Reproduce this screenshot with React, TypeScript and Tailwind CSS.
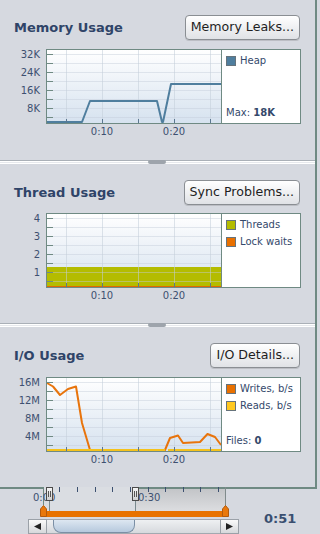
import type { ReactNode } from "react";

const MAJOR_Y = [5, 23, 41, 59];
const MINOR_Y = [14, 32, 50, 68];
const GRID_X = [66, 102, 138, 174, 210];
const RULER_TICKS = [59, 77, 95, 112, 130, 148, 165, 183, 200, 218];

function Chart({ id, yLabels, under, children }: { id: string; yLabels: string[]; under?: ReactNode; children?: ReactNode }) {
  return (
    <svg width={222} height={90} className="block shrink-0" fontFamily="DejaVu Sans, sans-serif">
      <defs>
        <linearGradient id={id} x1="0" y1="0" x2="0" y2="1">
          <stop offset="0" stopColor="#ffffff" />
          <stop offset="1" stopColor="#d6e2ef" />
        </linearGradient>
      </defs>
      <rect x={47} y={1} width={174} height={73} fill={`url(#${id})`} />
      {under}
      {[...MAJOR_Y, ...MINOR_Y].map((y) => (
        <line key={y} x1={47} x2={221} y1={y + 0.5} y2={y + 0.5} stroke="#c3cdd9" strokeOpacity={0.45} />
      ))}
      {GRID_X.map((x) => (
        <line key={x} x1={x + 0.5} x2={x + 0.5} y1={1} y2={74} stroke="#c3cdd9" strokeOpacity={0.55} />
      ))}
      {children}
      {[...MAJOR_Y, ...MINOR_Y].map((y) => (
        <line key={y} x1={47} x2={53} y1={y + 0.5} y2={y + 0.5} stroke="#6f8a83" />
      ))}
      {GRID_X.map((x) => (
        <line key={x} x1={x + 0.5} x2={x + 0.5} y1={70} y2={74} stroke="#5b7790" />
      ))}
      <rect x={46.5} y={0.5} width={175} height={74} fill="none" stroke="#6f8a83" />
      {yLabels.map((label, i) => (
        <text key={label} x={40} y={MAJOR_Y[i] + 4} fontSize={10} fill="#3d5070" textAnchor="end">
          {label}
        </text>
      ))}
      <text x={102} y={86} fontSize={10} fill="#3d5070" textAnchor="middle">
        0:10
      </text>
      <text x={174} y={86} fontSize={10} fill="#3d5070" textAnchor="middle">
        0:20
      </text>
    </svg>
  );
}

function Legend({ items, footer }: { items: { label: string; swatch: string }[]; footer?: ReactNode }) {
  return (
    <div className="flex h-[75px] w-[79px] flex-col border-y border-r border-[#6f8a83] bg-white pb-[5px] pl-[4px] pt-[6px]">
      <div className="flex flex-col gap-[7px]">
        {items.map((item) => (
          <div key={item.label} className="flex h-[10px] items-center gap-[4px]">
            <span className={`h-[10px] w-[10px] shrink-0 border border-[#66737c] ${item.swatch}`} />
            <span className="text-[10px] leading-none text-[#34496b]">{item.label}</span>
          </div>
        ))}
      </div>
      {footer && <div className="mt-auto text-[10px] leading-none text-[#34496b]">{footer}</div>}
    </div>
  );
}

function Section({
  title,
  action,
  className,
  chartGap,
  chart,
  legend,
}: {
  title: string;
  action: string;
  className: string;
  chartGap: string;
  chart: ReactNode;
  legend: ReactNode;
}) {
  return (
    <section className={`flex flex-col ${className}`}>
      <div className="flex h-[25px] items-center justify-between pl-[14px] pr-[15px]">
        <h2 className="text-[13px] font-bold leading-none text-[#2f4468]">{title}</h2>
        <button
          type="button"
          className="flex h-[25px] items-center rounded-[4px] border border-[#8a8e93] bg-linear-to-b from-white to-[#e0e2e6] px-[5px] text-[12.6px] leading-none text-[#1e1e1e] shadow-[0_1px_0_rgba(0,0,0,0.12)]"
        >
          {action}
        </button>
      </div>
      <div className={`flex items-start ${chartGap}`}>
        {chart}
        {legend}
      </div>
    </section>
  );
}

function Splitter() {
  return (
    <div className="relative flex h-[4px] flex-col">
      <div className="h-px bg-[#aab0b7]" />
      <div className="h-px bg-white" />
      <div className="h-px bg-[#e6e8ec]" />
      <div className="h-px bg-white" />
      <div className="absolute left-[148px] top-0 h-[4px] w-[18px] rounded-[2px] bg-[#9ea4ac]" />
    </div>
  );
}

function Handle({ className }: { className: string }) {
  return (
    <div
      className={`absolute top-0 flex h-[14px] w-[7px] justify-center gap-px border border-[#4b4b4b] bg-linear-to-b from-[#f4f4f4] to-[#cfd0d2] pt-[3px] ${className}`}
    >
      <span className="h-[6px] w-px bg-[#555]" />
      <span className="h-[6px] w-px bg-[#555]" />
    </div>
  );
}

function Marker({ className }: { className: string }) {
  return (
    <svg width={7} height={12} className={`absolute top-[18px] ${className}`}>
      <polygon points="0.5,11.5 0.5,4 3.5,0.5 6.5,4 6.5,11.5" fill="#e9780c" stroke="#b35a0d" />
    </svg>
  );
}

function Timeline() {
  return (
    <div className="flex h-[47px]">
      <div className="relative w-[240px]">
        <div className="absolute left-0 top-0 h-[2px] w-[43px] bg-[#6f8a83]" />
        <div className="absolute left-[43px] top-0 h-[24px] w-[92px] bg-[#dadde2]" />
        <div className="absolute left-[135px] top-0 h-[2px] w-[105px] bg-[#6f8a83]" />
        <div className="absolute left-[135px] top-[2px] h-[22px] w-[90px] bg-linear-to-b from-[#c3c5c8] to-[#dcdde0]" />
        <div className="absolute left-[225px] top-0 h-[24px] w-px bg-[#808b8c]" />
        <div className="absolute left-[43px] top-0 h-[18px] w-px bg-[#6f8a83]" />
        <svg width={240} height={6} className="absolute left-0 top-0">
          {RULER_TICKS.map((x) => (
            <line key={x} x1={x + 0.5} x2={x + 0.5} y1={0} y2={5} stroke="#3c5070" />
          ))}
        </svg>
        <span className="absolute left-[33px] top-[6px] text-[10px] leading-[10px] text-[#3d5070]">0:00</span>
        <span className="absolute left-[138px] top-[6px] text-[10px] leading-[10px] text-[#3d5070]">0:30</span>
        <div className="absolute left-[49px] top-[14px] h-[10px] w-px bg-[#7a8a8e]" />
        <div className="absolute left-[135px] top-[14px] h-[10px] w-px bg-[#7a8a8e]" />
        <Handle className="left-[46px]" />
        <Handle className="left-[132px]" />
        <div className="absolute left-[45px] top-[24px] h-[6px] w-[180px] bg-[#e87200]" />
        <Marker className="left-[40px]" />
        <Marker className="left-[222px]" />
        <div className="ml-[28px] mt-[32px] flex h-[15px] w-[211px]">
          <div className="flex w-[19px] items-center justify-center border border-[#9ba1a8] bg-linear-to-b from-[#fafafa] to-[#d6d8db]">
            <svg width={7} height={7}>
              <polygon points="7,0 7,7 0,3.5" fill="#222" />
            </svg>
          </div>
          <div className="flex flex-1 border-y border-[#a3a9b0] bg-linear-to-b from-[#eef0f2] to-[#d6d9dd]">
            <div className="ml-[6px] h-full w-[82px] rounded-b-[8px] border border-t-0 border-[#7b8fa5] bg-linear-to-b from-[#dde7f1] to-[#b6c9dd]" />
          </div>
          <div className="flex w-[19px] items-center justify-center border border-[#9ba1a8] bg-linear-to-b from-[#fafafa] to-[#d6d8db]">
            <svg width={7} height={7}>
              <polygon points="0,0 0,7 7,3.5" fill="#222" />
            </svg>
          </div>
        </div>
      </div>
      <div className="w-[77px] border-t-2 border-[#6f8a83] pl-[24px] pt-[17px]">
        <span className="text-[13px] font-bold leading-[13px] text-[#3a4f70]">0:51</span>
      </div>
    </div>
  );
}

export default function App() {
  return (
    <div className="h-[534px] w-[320px] overflow-hidden bg-[#d6d9e0] font-['DejaVu_Sans',sans-serif]">
      <div className="flex h-[487px] w-[317px] flex-col border-r-2 border-[#6f8a83]">
        <Section
          title="Memory Usage"
          action="Memory Leaks..."
          className="h-[160px] pt-[15px]"
          chartGap="mt-[9px]"
          chart={
            <Chart id="mem" yLabels={["32K", "24K", "16K", "8K"]}>
              <polyline
                points="47,73 82,73 90,52 157,52 162,73 163,73 171,35 221,35"
                fill="none"
                stroke="#4f7e9e"
                strokeWidth={2}
                strokeLinejoin="round"
              />
            </Chart>
          }
          legend={
            <Legend
              items={[{ label: "Heap", swatch: "bg-[#4f7e9e]" }]}
              footer={
                <>
                  Max: <span className="font-bold">18K</span>
                </>
              }
            />
          }
        />
        <Splitter />
        <Section
          title="Thread Usage"
          action="Sync Problems..."
          className="h-[159px] pt-[16px]"
          chartGap="mt-[8px]"
          chart={
            <Chart
              id="thr"
              yLabels={["4", "3", "2", "1"]}
              under={<rect x={47} y={54} width={174} height={20} fill="#b4bc00" />}
            >
              <line x1={47} x2={221} y1={73.5} y2={73.5} stroke="#e06a00" />
            </Chart>
          }
          legend={
            <Legend
              items={[
                { label: "Threads", swatch: "bg-[#b4bc00]" },
                { label: "Lock waits", swatch: "bg-[#e87000]" },
              ]}
            />
          }
        />
        <Splitter />
        <Section
          title="I/O Usage"
          action="I/O Details..."
          className="h-[160px] pt-[16px]"
          chartGap="mt-[9px]"
          chart={
            <Chart id="io" yLabels={["16M", "12M", "8M", "4M"]}>
              <polyline
                points="47,6 53,9.5 60,18 68,12 76,9.5 82,46 90,73 165,73 170,61 178,58.5 183,66 200,65 207.5,57 215,60 221,68"
                fill="none"
                stroke="#e8740c"
                strokeWidth={2}
                strokeLinejoin="round"
              />
              <line x1={47} x2={165} y1={73} y2={73} stroke="#f4c21c" strokeWidth={2} />
              <line x1={168} x2={221} y1={73} y2={73} stroke="#f4c21c" strokeWidth={2} />
            </Chart>
          }
          legend={
            <Legend
              items={[
                { label: "Writes, b/s", swatch: "bg-[#e87000]" },
                { label: "Reads, b/s", swatch: "bg-[#ffc820]" },
              ]}
              footer={
                <>
                  Files: <span className="font-bold">0</span>
                </>
              }
            />
          }
        />
      </div>
      <Timeline />
    </div>
  );
}
